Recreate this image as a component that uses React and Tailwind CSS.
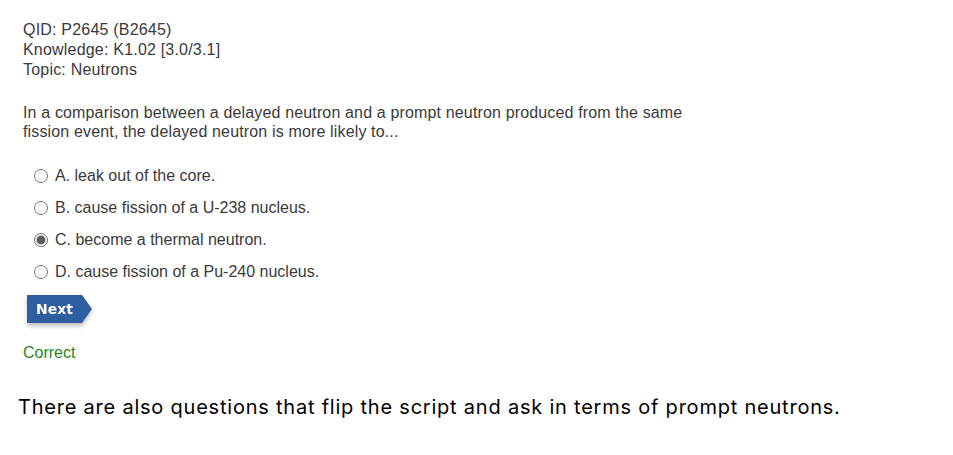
import React from 'react';

const options = [
  { key: 'A', text: 'leak out of the core.' },
  { key: 'B', text: 'cause fission of a U-238 nucleus.' },
  { key: 'C', text: 'become a thermal neutron.', checked: true },
  { key: 'D', text: 'cause fission of a Pu-240 nucleus.' },
];

function Radio({ checked }) {
  return (
    <span className="w-[14px] h-[14px] rounded-full border border-[#767676] bg-white flex items-center justify-center shrink-0">
      {checked && <span className="w-[8px] h-[8px] rounded-full bg-[#5a5a5a] ring-1 ring-[#bdbdbd]" />}
    </span>
  );
}

function NextButton() {
  return (
    <div className="relative w-[66px] h-[29px] drop-shadow-[0_3px_2px_rgba(0,0,0,0.25)]">
      <svg width="66" height="29" viewBox="0 0 66 29" className="absolute inset-0">
        <polygon points="0,0 55,0 65,14 55,28 0,28" fill="#2d5e9f" />
      </svg>
      <span className="relative block pl-[9px] pt-[5px] text-[14px] font-bold text-white leading-[18px] font-['DejaVu_Sans',sans-serif]">
        Next
      </span>
    </div>
  );
}

export default function App() {
  return (
    <div className="w-[953px] h-[455px] bg-white font-['Liberation_Sans',Arial,sans-serif] text-[#3a3a3a]">
      <div className="pt-[20px] pl-[23px] text-[16px] leading-[20px] tracking-[0.2px]">
        <div>QID: P2645 (B2645)</div>
        <div>Knowledge: K1.02 [3.0/3.1]</div>
        <div>Topic: Neutrons</div>
      </div>

      <p className="mt-[23px] pl-[23px] text-[16px] leading-[19px] w-[705px] tracking-[0.15px]">
        In a comparison between a delayed neutron and a prompt neutron produced from the same fission event, the delayed neutron is more likely to...
      </p>

      <div className="mt-[25px] pl-[34px] flex flex-col gap-[12px]">
        {options.map((o) => (
          <label key={o.key} className="flex items-center gap-[7px] h-[20px] text-[16px]">
            <Radio checked={o.checked} />
            <span>{o.key}. {o.text}</span>
          </label>
        ))}
      </div>

      <div className="mt-[13px] pl-[27px]">
        <NextButton />
      </div>

      <div className="mt-[17px] pl-[23px] text-[16px] text-[#228b22]">Correct</div>

      <p className="mt-[30px] pl-[18px] text-[20px] leading-[24px] text-black tracking-[0.78px] font-['Inter',sans-serif]">
        There are also questions that flip the script and ask in terms of prompt neutrons.
      </p>
    </div>
  );
}
